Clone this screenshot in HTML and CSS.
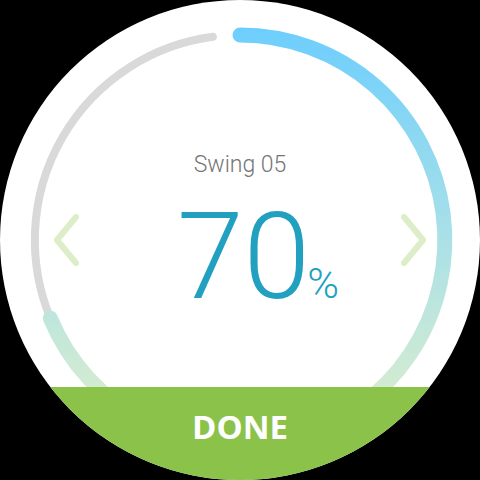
FILE: index.html
```html
<!DOCTYPE html>
<html>
<head>
<meta charset="utf-8">
<link rel="stylesheet" href="styles.css">
</head>
<body>
<div class="watch">
  <svg class="ring" viewBox="0 0 480 480" width="480" height="480">
    <defs>
      <linearGradient id="prog" gradientUnits="userSpaceOnUse" x1="0" y1="28" x2="0" y2="400">
        <stop offset="0" stop-color="#6dcefd"/>
        <stop offset="0.55" stop-color="#a8e0e8"/>
        <stop offset="1" stop-color="#d6ecd0"/>
      </linearGradient>
    </defs>
    <path class="track" d="M50.3,318.1 A205,205 0 0 1 212.9,36.8"/>
    <path class="progress" d="M240,35 A205,205 0 1 1 50.3,318.1"/>
  </svg>
  <div class="main">
    <svg class="chev" viewBox="0 0 26 52" width="26" height="52"><path d="M22,3 L3,26 L22,49"/></svg>
    <div class="readout">
      <div class="label">Swing 05</div>
      <div class="value-row">
        <span class="value">70</span><span class="unit">%</span>
      </div>
    </div>
    <svg class="chev" viewBox="0 0 26 52" width="26" height="52"><path d="M4,3 L23,26 L4,49"/></svg>
  </div>
  <div class="done">DONE</div>
</div>
</body>
</html>
```
FILE: styles.css
```css
html, body {
  margin: 0;
  padding: 0;
  background: #000;
}
.watch {
  width: 480px;
  height: 480px;
  border-radius: 50%;
  overflow: hidden;
  background: #fff;
  position: relative;
  display: flex;
  flex-direction: column;
}
.ring {
  position: absolute;
  left: 0;
  top: 0;
}
.track {
  fill: none;
  stroke: #d9d9d9;
  stroke-width: 8;
  stroke-linecap: round;
}
.progress {
  fill: none;
  stroke: url(#prog);
  stroke-width: 15;
  stroke-linecap: round;
}
.main {
  flex: 1;
  display: flex;
  justify-content: space-between;
  align-items: flex-start;
  padding: 0 54px;
}
.chev {
  margin-top: 214px;
  flex: none;
}
.chev path {
  fill: none;
  stroke: #dcedc8;
  stroke-width: 6;
  stroke-linecap: round;
  stroke-linejoin: round;
}
.readout {
  flex: 1;
  display: flex;
  flex-direction: column;
  align-items: center;
  margin-top: 152px;
  font-family: Roboto, "Liberation Sans", sans-serif;
  position: relative;
  z-index: 1;
}
.label {
  font-size: 23px;
  line-height: 26px;
  font-weight: 300;
  color: #757575;
}
.value-row {
  display: flex;
  align-items: baseline;
  margin-top: 19px;
  padding-left: 36px;
  color: #22a0c0;
}
.value {
  font-size: 120px;
  line-height: 120px;
  font-weight: 300;
}
.unit {
  font-size: 43px;
  line-height: 44px;
  font-weight: 300;
  margin-left: -3px;
}
.done {
  position: relative;
  height: 93px;
  box-sizing: border-box;
  padding-top: 20px;
  background: #8bc34a;
  color: #fff;
  text-align: center;
  font-family: "Open Sans", "Liberation Sans", sans-serif;
  font-weight: 700;
  font-size: 33px;
  line-height: 40px;
}
```
